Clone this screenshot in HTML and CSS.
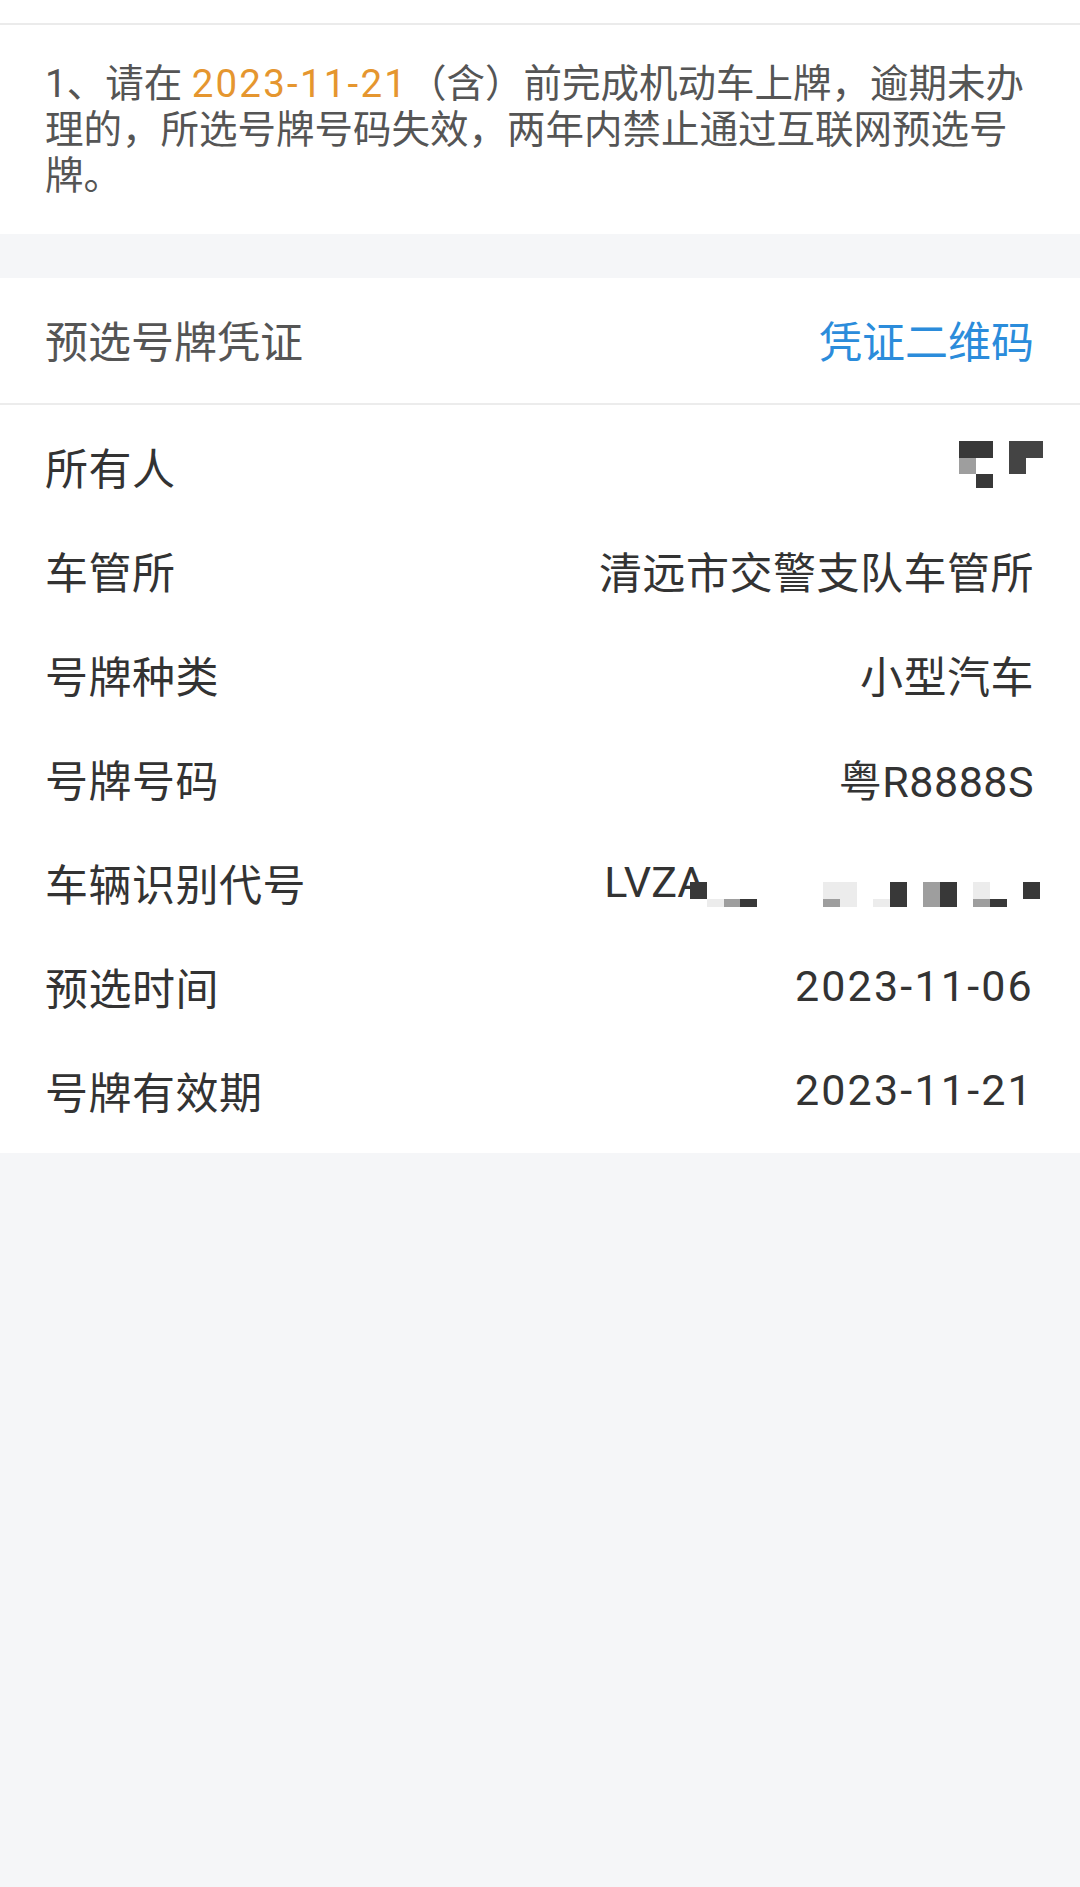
FILE: index.html
```html
<!DOCTYPE html>
<html lang="zh-CN">
<head>
  <meta charset="UTF-8" />
  <title>预选号牌凭证</title>
  <meta name="viewport" content="width=device-width,initial-scale=1" />
  <link rel="stylesheet" href="styles.css">
</head>
<body>
    <div class="topbar"></div>

    <!-- notice -->
    <div class="notice">
        1、请在 <span class="date">2023-11-21</span>（含）前完成机动车上牌，逾期未办理的，所选号牌号码失效，两年内禁止通过互联网预选号牌。
    </div>

    <div class="card-head">
        <span class="card-title">预选号牌凭证</span>
        <a class="qr-link">凭证二维码</a>
    </div>

    <div class="details">
        <div class="row">
            <span class="label">所有人</span>
            <div class="owner-mask">
                <i class="d"></i><i class="d"></i><i></i><i class="d2"></i><i class="d2"></i>
                <i class="g"></i><i></i><i></i><i class="d2"></i><i></i>
                <i></i><i class="d"></i><i></i><i></i><i></i>
            </div>
        </div>
        <div class="row">
            <span class="label">车管所</span>
            <span class="value">清远市交警支队车管所</span>
        </div>
        <div class="row">
            <span class="label">号牌种类</span>
            <span class="value">小型汽车</span>
        </div>
        <div class="row">
            <span class="label">号牌号码</span>
            <span class="value">粤R8888S</span>
        </div>
        <div class="row">
            <span class="label">车辆识别代号</span>
            <div class="vin">
                <span class="value vin-text">LVZA</span>
                <div class="vin-mask">
                    <i class="d"></i><i></i><i></i><i></i><i></i><i></i><i></i><i></i><i class="l"></i><i class="l"></i><i></i><i></i><i class="d"></i><i></i><i class="g"></i><i class="d"></i><i></i><i class="l"></i><i></i><i></i><i class="d"></i>
                    <i></i><i class="l"></i><i class="g"></i><i class="d"></i><i></i><i></i><i></i><i></i><i class="g"></i><i class="l"></i><i></i><i class="l"></i><i class="d"></i><i></i><i class="g"></i><i class="d"></i><i></i><i class="g"></i><i class="d"></i><i></i><i></i>
                </div>
            </div>
        </div>
        <div class="row">
            <span class="label">预选时间</span>
            <span class="value num">2023-11-06</span>
        </div>
        <div class="row">
            <span class="label">号牌有效期</span>
            <span class="value num">2023-11-21</span>
        </div>
    </div>
</body>
</html>
```

FILE: styles.css
```css
body {
    margin: 0;
    background-color: #f5f6f8;
    font-family: Roboto, "Noto Sans CJK SC", sans-serif;
    color: #333;
}

.topbar {
    height: 23px;
    background-color: #fff;
    border-bottom: 2px solid #ebebeb;
}

.notice {
    background-color: #fff;
    padding: 36px 50px 35px 45px;
    font-size: 38.5px;
    line-height: 46px;
    color: #555;
}

.notice .date {
    color: #e5962f;
    letter-spacing: 2.2px;
}

.card-head {
    margin-top: 44px;
    height: 127px;
    box-sizing: border-box;
    padding: 0 46px 3px 45px;
    background-color: #fff;
    border-bottom: 2px solid #ececec;
    display: flex;
    justify-content: space-between;
    align-items: center;
    font-size: 43px;
}

.card-title {
    color: #555;
}

.qr-link {
    color: #2b8cdb;
}

.details {
    background-color: #fff;
    padding: 9px 46px 11px 45px;
}

.row {
    height: 104px;
    display: flex;
    justify-content: space-between;
    align-items: center;
    font-size: 43px;
}

.label,
.value {
    color: #333;
    letter-spacing: 0.5px;
}

.value.num {
    letter-spacing: 2.2px;
}

/* mosaic blocks, cells are just coloured squares */
.owner-mask {
    display: grid;
    grid-template-columns: repeat(5, 16.8px);
    grid-template-rows: 17px 16px 14px;
    margin-right: -9px;
    margin-top: -3px;
}

.vin {
    display: flex;
    align-items: center;
}

.vin-text {
    letter-spacing: 0;
}

.vin-mask {
    display: grid;
    grid-template-columns: repeat(21, 16.67px);
    grid-template-rows: 17px 8px;
    margin-left: -15px;
    margin-right: -6px;
    margin-top: 24px;
}

.owner-mask i,
.vin-mask i {
    display: block;
}

i.d { background-color: #383838; }
i.d2 { background-color: #444; }
i.g { background-color: #9e9e9e; }
i.l { background-color: #ececec; }
```
